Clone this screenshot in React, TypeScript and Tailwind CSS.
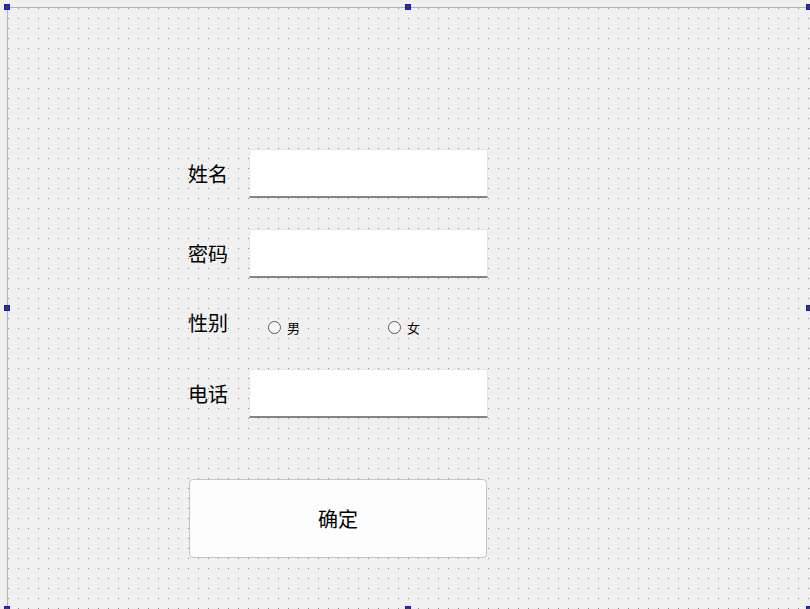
const font = { fontFamily: '"Noto Sans CJK SC", "Noto Sans", sans-serif' };

function Handle({ className }: { className: string }) {
  return (
    <div
      className={`absolute size-[6px] border border-[#1010f0] bg-[#3c3c3c] ${className}`}
    />
  );
}

function Field({ label }: { label: string }) {
  return (
    <div className="flex h-[49px] items-center">
      <span className="w-[61px] text-[20px] leading-none text-black">{label}</span>
      <div className="h-[49px] w-[239px] border border-b-2 border-[#e6e6e6] border-b-[#858585] bg-white" />
    </div>
  );
}

function Radio({ label }: { label: string }) {
  return (
    <div className="flex w-[120px] items-center gap-[6px]">
      <span className="size-[13px] rounded-full border border-[#5a5a5a] bg-[#f7f7f7]" />
      <span className="text-[13px] leading-none text-black">{label}</span>
    </div>
  );
}

export default function App() {
  return (
    <div
      style={font}
      className="relative h-[609px] w-[810px] overflow-hidden bg-[#f0f0f0] pl-[7px] pt-[7px]"
    >
      <div className="h-[602px] w-[803px] border-l border-t border-[#b4b4b4] bg-[conic-gradient(at_1px_1px,transparent_75%,#8c8c8c_0)] bg-[size:10px_10px] pl-[180px] pt-[141px]">
        <Field label="姓名" />
        <div className="mt-[31px]">
          <Field label="密码" />
        </div>
        <div className="mt-[20px] flex h-[49px] items-center">
          <span className="w-[61px] text-[20px] leading-none text-black">性别</span>
          <div className="mt-[10px] flex pl-[19px]">
            <Radio label="男" />
            <Radio label="女" />
          </div>
        </div>
        <div className="mt-[22px]">
          <Field label="电话" />
        </div>
        <button className="ml-[1px] mt-[61px] flex h-[79px] w-[298px] items-center justify-center rounded-[4px] border border-[#c4c4c4] bg-[#fdfdfd] text-[20px] text-black">
          确定
        </button>
      </div>

      <Handle className="left-[4px] top-[4px]" />
      <Handle className="left-[405px] top-[4px]" />
      <Handle className="left-[806px] top-[4px]" />
      <Handle className="left-[4px] top-[305px]" />
      <Handle className="left-[806px] top-[305px]" />
      <Handle className="left-[4px] top-[606px]" />
      <Handle className="left-[405px] top-[606px]" />
      <Handle className="left-[806px] top-[606px]" />
    </div>
  );
}
